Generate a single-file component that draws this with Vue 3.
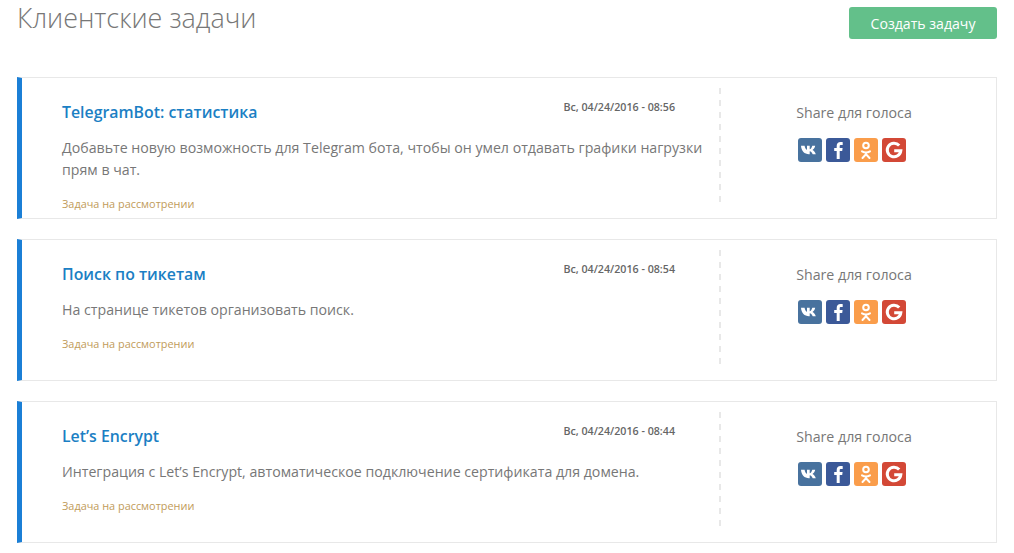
<script setup>
const tasks = [
  {
    title: "TelegramBot: статистика",
    date: "Вс, 04/24/2016 - 08:56",
    text: "Добавьте новую возможность для Telegram бота, чтобы он умел отдавать графики нагрузки прям в чат.",
  },
  {
    title: "Поиск по тикетам",
    date: "Вс, 04/24/2016 - 08:54",
    text: "На странице тикетов организовать поиск.",
  },
  {
    title: "Let’s Encrypt",
    date: "Вс, 04/24/2016 - 08:44",
    text: "Интеграция с Let’s Encrypt, автоматическое подключение сертификата для домена.",
  },
];
</script>

<template>
  <div class="page">
    <header class="head">
      <h1 class="head__title">Клиентские задачи</h1>
      <button type="button" class="head__btn">Создать задачу</button>
    </header>

    <div class="list">
      <article v-for="task in tasks" :key="task.title" class="task">
        <div class="task__main">
          <div class="task__top">
            <a class="task__title">{{ task.title }}</a>
            <span class="task__date">{{ task.date }}</span>
          </div>
          <p class="task__text">{{ task.text }}</p>
          <div class="task__status">Задача на рассмотрении</div>
        </div>
        <div class="task__share">
          <div class="task__share-label">Share для голоса</div>
          <div class="icons">
            <a class="icon icon--vk">
              <svg viewBox="0 0 24 24" width="24" height="24">
                <path fill="#fff" d="M3.500 7.800h3.100c.3 2.100 1.300 3.700 2.400 4.100V7.800h2.700v3.500c1-.2 2.100-1.600 2.600-3.500h2.900c-.4 2.100-1.700 3.600-2.700 4.200 1.100.6 2.700 2 3.300 4.200h-3.100c-.5-1.600-1.700-2.800-3-3v3h-.7c-4.600 0-7.600-3.100-8-8.400z" />
              </svg>
            </a>
            <a class="icon icon--fb">
              <svg viewBox="0 0 24 24" width="24" height="24">
                <path fill="#fff" d="M13.700 21v-8h2.500l.4-3h-2.900V8.300c0-.9.300-1.400 1.500-1.400h1.500V4.200c-.3 0-1.200-.1-2.200-.1-2.300 0-3.800 1.300-3.800 3.900V10H8.200v3h2.500v8z" />
              </svg>
            </a>
            <a class="icon icon--ok">
              <svg viewBox="0 0 24 24" width="24" height="24">
                <g fill="none" stroke="#fff" stroke-width="2" stroke-linecap="round">
                  <circle cx="12" cy="7.500" r="2.800" />
                  <path d="M8 13.300c2.500 1.500 5.500 1.500 8 0M12 14.500v1.800M12 16.300l-3.500 3.700M12 16.300l3.500 3.700" />
                </g>
              </svg>
            </a>
            <a class="icon icon--g">
              <svg viewBox="0 0 24 24" width="24" height="24">
                <path fill="none" stroke="#fff" stroke-width="3" d="M17.200 7.500A6.800 6.800 0 1 0 18.800 12.800H12.200" />
              </svg>
            </a>
          </div>
        </div>
      </article>
    </div>
  </div>
</template>

<style>
body {
  background: #fff;
}
</style>

<style scoped>
.page {
  padding: 0 17px;
  font-family: "Open Sans", "Noto Sans", sans-serif;
  color: #777;
}

.head {
  display: flex;
  justify-content: space-between;
  align-items: flex-start;
  height: 77px;
}

.head__title {
  margin: 0;
  font-size: 26.9px;
  font-weight: 300;
  line-height: 36px;
  color: #777;
}

.head__btn {
  width: 148px;
  height: 32px;
  margin-top: 7px;
  border: none;
  border-radius: 3px;
  background: #63c08a;
  color: #fff;
  font-family: inherit;
  font-size: 14.1px;
}

.list {
  display: flex;
  flex-direction: column;
  gap: 20px;
}

.task {
  display: flex;
  height: 142px;
  box-sizing: border-box;
  border: 1px solid #e8e8e8;
  border-left: 5px solid #1b7fd6;
}

.task__main {
  width: 699px;
  box-sizing: border-box;
  margin: 10px 0 15px;
  padding: 13px 10px 0 40px;
  background: linear-gradient(#e8e8e8 6px, transparent 6px) right top / 2px 12px repeat-y;
}

.task__top {
  display: flex;
  justify-content: space-between;
  align-items: flex-start;
  padding-right: 36px;
}

.task__title {
  font-size: 15.85px;
  font-weight: 600;
  line-height: 22px;
  color: #1b7fc4;
}

.task__date {
  margin-top: -1px;
  font-size: 10.7px;
  font-weight: 600;
  line-height: 14px;
  color: #666;
}

.task__text {
  margin: 14px 0 0;
  font-size: 14.18px;
  line-height: 22.4px;
  color: #777;
  max-width: 641px;
}

.task__status {
  margin-top: 14.5px;
  font-size: 10.9px;
  line-height: 15px;
  color: #bf9b5a;
}

.task__share {
  flex: 1;
  padding: 24px 9px 0 0;
  text-align: center;
}

.task__share-label {
  font-size: 14.2px;
  line-height: 22px;
  color: #777;
}

.icons {
  display: flex;
  justify-content: center;
  gap: 4px;
  margin-top: 14px;
  padding-right: 4px;
}

.icon {
  display: block;
  width: 24px;
  height: 24px;
  border-radius: 3px;
}

.icon svg {
  display: block;
}

.icon--vk {
  background: #48729e;
}

.icon--fb {
  background: #3b5998;
}

.icon--ok {
  background: #fa9d4b;
}

.icon--g {
  background: #d34836;
}
</style>
